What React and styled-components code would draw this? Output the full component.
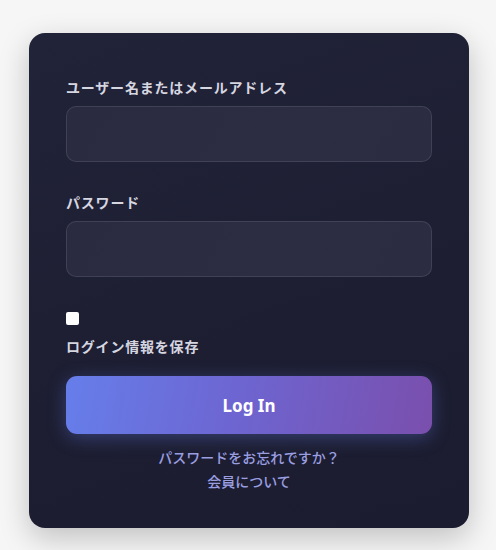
import React, { useState } from 'react';
import styled, { createGlobalStyle } from 'styled-components';

const GlobalStyle = createGlobalStyle`
  html, body {
    margin: 0;
    padding: 0;
    background: #f6f6f7;
  }
  body {
    font-family: 'Noto Sans CJK JP', 'Noto Sans', sans-serif;
  }
`;

const Page = styled.div`
  display: flex;
  justify-content: center;
  align-items: flex-start;
  width: 496px;
  height: 550px;
  padding: 33px 0 0 2px;
  box-sizing: border-box;
`;

const Card = styled.form`
  width: 440px;
  box-sizing: border-box;
  padding: 44px 37px 36px;
  border-radius: 16px;
  background: linear-gradient(160deg, #212338 0%, #1d1e32 60%, #1b1c2f 100%);
  box-shadow: 0 10px 30px rgba(0, 0, 0, 0.22);
  display: flex;
  flex-direction: column;
`;

const Field = styled.div`
  display: flex;
  flex-direction: column;
  margin-bottom: ${p => p.$gap || 0}px;
`;

const Label = styled.label`
  display: block;
  font-size: 14px;
  line-height: 21px;
  font-weight: 700;
  letter-spacing: 0.8px;
  color: #d6d6e0;
  margin-bottom: ${p => p.$gap || 0}px;
`;

const Input = styled.input`
  height: 56px;
  box-sizing: border-box;
  border-radius: 10px;
  border: 1px solid rgba(255, 255, 255, 0.1);
  background: linear-gradient(120deg, #2a2b40 0%, #2c2d43 60%, #2b2c41 100%);
  color: #e8e8f0;
  font-size: 15px;
  padding: 0 16px;
  outline: none;
  font-family: inherit;
`;

const Remember = styled.div`
  display: flex;
  flex-direction: column;
  align-items: flex-start;
  gap: 11px;
  margin-top: 35px;
`;

const Check = styled.input`
  appearance: none;
  margin: 0;
  width: 13px;
  height: 13px;
  border-radius: 2px;
  background: #ffffff;
  &:checked {
    background: #667eea;
  }
`;

const Button = styled.button`
  margin-top: 19px;
  height: 58px;
  border: none;
  border-radius: 11px;
  background: linear-gradient(100deg, #667eea 0%, #6d66d2 45%, #7a4fad 100%);
  box-shadow: 0 4px 18px rgba(102, 126, 234, 0.35);
  color: #ffffff;
  font-family: 'Noto Sans', sans-serif;
  font-size: 17px;
  font-weight: 700;
  cursor: pointer;
`;

const Links = styled.div`
  margin-top: 13px;
  display: flex;
  flex-direction: column;
  align-items: center;
  gap: 3px;
`;

const LinkText = styled.a`
  font-size: 14px;
  line-height: 21px;
  font-weight: 500;
  color: #9a9ee0;
  text-decoration: none;
`;

const App = () => {
  const [form, setForm] = useState({ usuario: '', password: '', remember: false });

  const handleChange = e => {
    const { name, value, type, checked } = e.target;
    setForm({ ...form, [name]: type === 'checkbox' ? checked : value });
  };

  return (
    <>
      <GlobalStyle />
      <Page>
        <Card onSubmit={e => e.preventDefault()}>
          <Field $gap={30}>
            <Label htmlFor="user" $gap={8}>
              ユーザー名またはメールアドレス
            </Label>
            <Input id="user" name="usuario" type="text" value={form.usuario} onChange={handleChange} />
          </Field>
          <Field>
            <Label htmlFor="pass" $gap={8}>
              パスワード
            </Label>
            <Input id="pass" name="password" type="password" value={form.password} onChange={handleChange} />
          </Field>
          <Remember>
            <Check id="remember" name="remember" type="checkbox" checked={form.remember} onChange={handleChange} />
            <Label htmlFor="remember">ログイン情報を保存</Label>
          </Remember>
          <Button type="submit">Log In</Button>
          <Links>
            <LinkText href="#">パスワードをお忘れですか？</LinkText>
            <LinkText href="#">会員について</LinkText>
          </Links>
        </Card>
      </Page>
    </>
  );
};

export default App;
